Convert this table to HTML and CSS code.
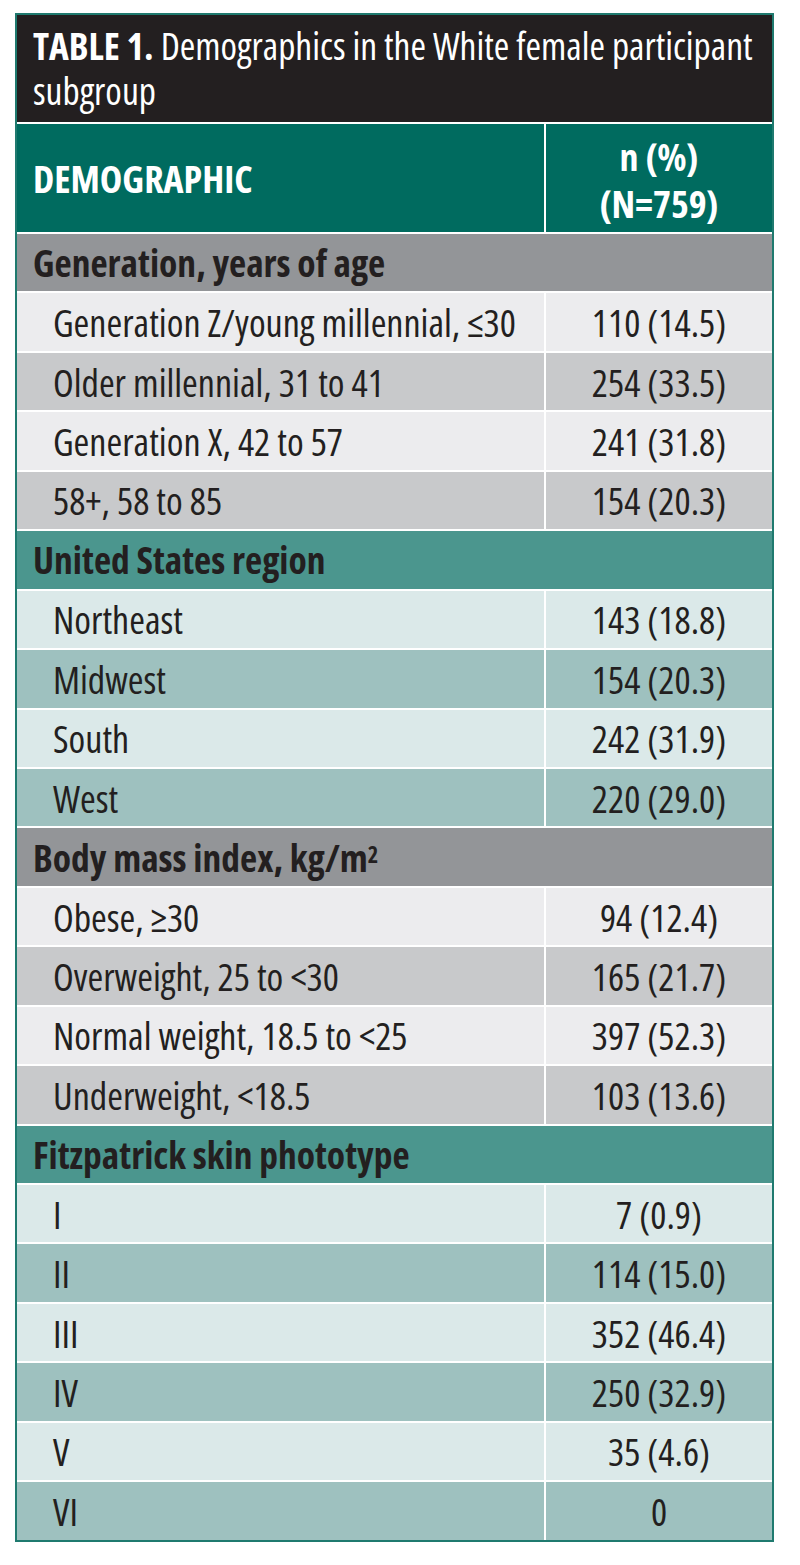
FILE: index.html
```html
<!DOCTYPE html>
<html lang="en">
<head>
<meta charset="utf-8">
<title>Table 1. Demographics</title>
<link rel="stylesheet" href="styles.css">
</head>
<body>
<div class="tbl">
  <div class="title"><b class="title-lead">TABLE 1.</b> Demographics in the White female participant subgroup</div>
  <div class="head head-left">DEMOGRAPHIC</div>
  <div class="head head-right">n (%)<br>(N=759)</div>

  <div class="sec gray">Generation, years of age</div>
  <div class="lab g1">Generation Z/young millennial, ≤30</div><div class="val g1">110 (14.5)</div>
  <div class="lab g2">Older millennial, 31 to 41</div><div class="val g2">254 (33.5)</div>
  <div class="lab g1">Generation X, 42 to 57</div><div class="val g1">241 (31.8)</div>
  <div class="lab g2">58+, 58 to 85</div><div class="val g2">154 (20.3)</div>

  <div class="sec teal">United States region</div>
  <div class="lab t1">Northeast</div><div class="val t1">143 (18.8)</div>
  <div class="lab t2">Midwest</div><div class="val t2">154 (20.3)</div>
  <div class="lab t1">South</div><div class="val t1">242 (31.9)</div>
  <div class="lab t2">West</div><div class="val t2">220 (29.0)</div>

  <div class="sec gray">Body mass index, kg/m<sup>2</sup></div>
  <div class="lab g1">Obese, ≥30</div><div class="val g1">94 (12.4)</div>
  <div class="lab g2">Overweight, 25 to &lt;30</div><div class="val g2">165 (21.7)</div>
  <div class="lab g1">Normal weight, 18.5 to &lt;25</div><div class="val g1">397 (52.3)</div>
  <div class="lab g2">Underweight, &lt;18.5</div><div class="val g2">103 (13.6)</div>

  <div class="sec teal">Fitzpatrick skin phototype</div>
  <div class="lab t1">I</div><div class="val t1">7 (0.9)</div>
  <div class="lab t2">II</div><div class="val t2">114 (15.0)</div>
  <div class="lab t1">III</div><div class="val t1">352 (46.4)</div>
  <div class="lab t2">IV</div><div class="val t2">250 (32.9)</div>
  <div class="lab t1">V</div><div class="val t1">35 (4.6)</div>
  <div class="lab t2">VI</div><div class="val t2">0</div>
</div>
</body>
</html>
```

FILE: styles.css
```css
html, body {
  margin: 0;
  padding: 0;
  background: #ffffff;
}

body {
  padding: 13px 0 0 15px;
  font-family: "Open Sans", "Noto Sans", sans-serif;
  font-stretch: 75%;
  color: #231f20;
}

.tbl {
  display: grid;
  grid-template-columns: 527px 226px;
  grid-template-rows: 107px 108px;
  grid-auto-rows: 57.45px;
  column-gap: 2px;
  row-gap: 2px;
  width: 755px;
  background: #ffffff;
  border: 2px solid #1f7a6f;
  white-space: nowrap;
}

.title {
  grid-column: 1 / -1;
  background: #231f20;
  color: #ffffff;
  padding: 8px 16px 0 16px;
  font-size: 37.5px;
  line-height: 45px;
  white-space: normal;
}

.title-lead {
  font-weight: bold;
}

.head {
  background: #006b5f;
  color: #ffffff;
  font-weight: bold;
  font-size: 38px;
  display: flex;
  align-items: center;
}

.head-left {
  padding-left: 16px;
}

.head-right {
  justify-content: center;
  text-align: center;
  line-height: 47px;
  padding-top: 3px;
}

.sec {
  grid-column: 1 / -1;
  display: flex;
  align-items: center;
  padding-left: 16px;
  font-weight: bold;
  font-size: 37.5px;
}

.sec sup {
  font-size: 60%;
  line-height: 0;
  position: relative;
  top: -0.1em;
}

.lab, .val {
  display: flex;
  align-items: center;
  font-size: 38px;
}

.lab {
  padding-left: 36px;
}

.val {
  justify-content: center;
}

.gray { background: #939598; }
.teal { background: #4b968e; }
.g1 { background: #ececee; }
.g2 { background: #c8c9cb; }
.t1 { background: #dbe9e9; }
.t2 { background: #9ec1bf; }
```
